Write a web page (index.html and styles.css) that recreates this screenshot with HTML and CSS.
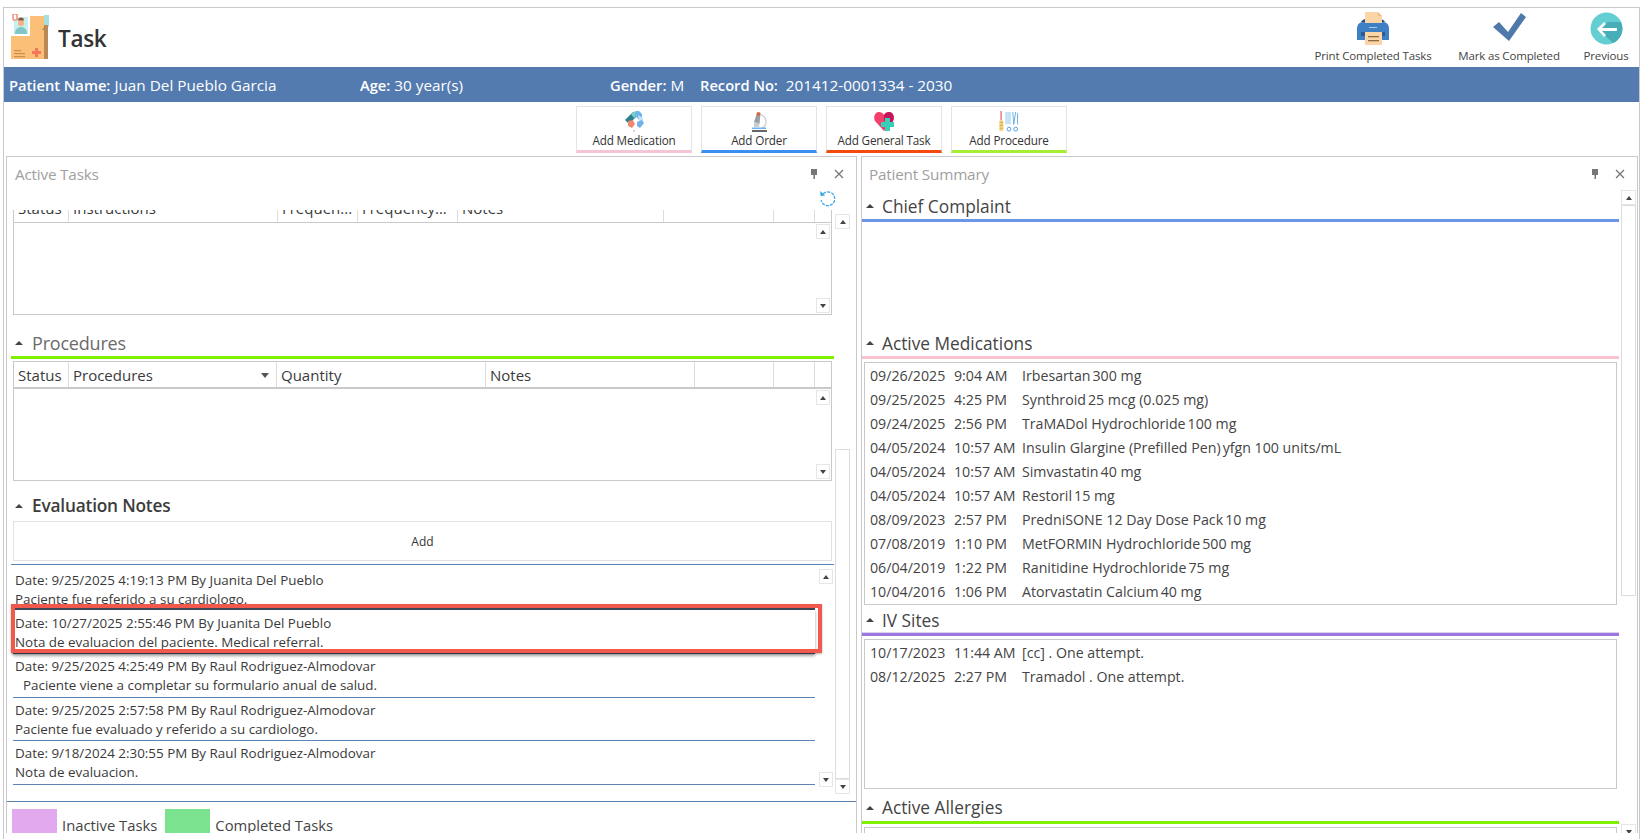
FILE: index.html
```html
<!DOCTYPE html>
<html lang="en">
<head>
<meta charset="utf-8">
<title>Task</title>
<link rel="stylesheet" href="styles.css">
</head>
<body>
<div class="frame">
  <header class="top">
    <div class="brand">
      <svg class="logo" width="38" height="46" viewBox="0 0 38 46">
        <rect x="33" y="1" width="5" height="12" fill="#a5dfe0"/>
        <path d="M3 2H33V45H0V22H3Z" fill="#fbbf77"/>
        <rect x="33" y="11" width="4" height="34" fill="#b98a55"/>
        <path d="M33 13l-2 3h2z" fill="#b98a55"/>
        <rect x="1" y="0" width="18" height="22" fill="#fff"/>
        <rect x="3" y="3" width="14" height="17" fill="#c6efed"/>
        <circle cx="10" cy="9" r="3" fill="#f3b184"/>
        <path d="M7 6.500a3 3 0 0 1 6 0z" fill="#8a5a3c"/>
        <path d="M4 20c0-5 3-7 6-7s6 2 6 7z" fill="#7fc6c4"/>
        <rect x="2" y="0" width="4" height="6" rx="1" fill="#fff" stroke="#f2725c" stroke-width="1.200"/>
        <rect x="3" y="36" width="7" height="1.200" fill="#c98f50"/>
        <rect x="3" y="39" width="11" height="1.200" fill="#c98f50"/>
        <rect x="3" y="42" width="11" height="1.200" fill="#c98f50"/>
        <path d="M24 34h3v3h3v3h-3v3h-3v-3h-3v-3h3z" fill="#f4775a"/>
      </svg>
      <h1 class="page-title">Task</h1>
    </div>
    <nav class="tools">
      <div class="tool tool-print">
        <svg width="34" height="33" viewBox="0 0 34 33">
          <path d="M1 17c0-4 2-7 6-7h20c4 0 6 3 6 7v11H1z" fill="#3f7fc4"/>
          <path d="M5 10c1-2 3-3 5-3h14c2 0 4 1 5 3z" fill="#25527f"/>
          <path d="M9 0h13l4 4v7H9z" fill="#fbd5a5"/>
          <path d="M22 0l4 4h-4z" fill="#e9c08c"/>
          <rect x="5" y="20" width="24" height="4" fill="#2c5c92"/>
          <rect x="13" y="15" width="8" height="1" fill="#a9cbee"/>
          <rect x="9" y="20" width="17" height="13" fill="#fbd5a5"/>
          <rect x="12" y="24" width="11" height="1.300" fill="#8c6b45"/>
          <rect x="12" y="28" width="11" height="1.300" fill="#8c6b45"/>
        </svg>
        <span class="tool-label">Print Completed Tasks</span>
      </div>
      <div class="tool tool-mark">
        <svg width="34" height="33" viewBox="0 0 34 33">
          <path d="M1 15l6-5 9 10L29 1l5 4-17 24z" fill="#4f79ab"/>
        </svg>
        <span class="tool-label">Mark as Completed</span>
      </div>
      <div class="tool tool-prev">
        <svg width="33" height="33" viewBox="0 0 33 33">
          <circle cx="16.500" cy="16.500" r="16" fill="#63cfd3"/>
          <path d="M8 17l10-7h13a16 16 0 0 1-8 21z" fill="#47adb7"/>
          <path d="M7 17l7-7 2 2-4 4h15v3H12l4 4-2 2z" fill="#fff"/>
        </svg>
        <span class="tool-label">Previous</span>
      </div>
    </nav>
  </header>

  <section class="patient-bar">
    <span class="pf pf-name"><b>Patient Name:</b> Juan Del Pueblo Garcia</span>
    <span class="pf pf-age"><b>Age:</b> 30 year(s)</span>
    <span class="pf pf-gender"><b>Gender:</b> M</span>
    <span class="pf pf-rec"><b>Record No:</b>&nbsp; 201412-0001334 - 2030</span>
  </section>

  <section class="actions">
    <div class="act act-pink">
      <svg width="22" height="21" viewBox="0 0 22 21">
        <path d="M2 9l8-8 4 4-8 8z" fill="#2f7f92"/>
        <path d="M8 3l4-3 3 3-4 4z" fill="#6fd4c4"/>
        <path d="M13 0h3l3 3v4l-3 2-4-5z" fill="#6fb2ee"/>
        <path d="M15 4l5 3v3l-4 1z" fill="#bfe6f4"/>
        <path d="M14 11l5-2 2 3-4 5-3-2z" fill="#6fb2ee"/>
        <path d="M5 10l5-1 2 4-3 4-4-2z" fill="#f08a6f"/>
        <circle cx="11" cy="20" r="1" fill="#f4b6a4"/>
      </svg>
      <span>Add Medication</span>
    </div>
    <div class="act act-blue">
      <svg width="20" height="21" viewBox="0 0 20 21">
        <path d="M12 4a7 7 0 0 1 1 13" fill="none" stroke="#d4d7da" stroke-width="1.500"/>
        <path d="M8 2h3.500l-1 11-5.500-2z" fill="#9aa0a6"/>
        <path d="M5 11l5.500 2-.5 3H5z" fill="#c9ccd0"/>
        <circle cx="9.500" cy="3" r="2" fill="#d5674c"/>
        <rect x="3" y="16.500" width="14" height="1.500" fill="#6fb2ee"/>
        <rect x="3" y="19" width="15" height="2" fill="#666"/>
      </svg>
      <span>Add Order</span>
    </div>
    <div class="act act-red">
      <svg width="21" height="21" viewBox="0 0 21 21">
        <path d="M10 20L1 10C-1 6 1 1 5 1c2 0 4 1 5 3 1-2 3-3 5-3 4 0 6 5 4 9z" fill="#f43f6b"/>
        <path d="M10 4c1-2 3-3 5-3 4 0 6 5 4 9l-4 5-5-6z" fill="#c2185b"/>
        <path d="M11 7h5v4h4v5h-4v4h-5v-4H7v-5h4z" fill="#35d0b8"/>
      </svg>
      <span>Add General Task</span>
    </div>
    <div class="act act-green">
      <svg width="22" height="22" viewBox="0 0 22 22">
        <rect x="2" y="0" width="1.400" height="10" fill="#e8736e"/>
        <path d="M1 10h4v11H1z" fill="#f5d57a"/>
        <path d="M1 12h4M1 15h4M1 18h4" stroke="#d9a94c" stroke-width="1"/>
        <path d="M8 1v13M10 1v13M12 1v13" stroke="#a8d4f2" stroke-width="1.300"/>
        <path d="M15 1l1 13M18 1l-2 13M20 2v12" stroke="#6aaee4" stroke-width="1"/>
        <circle cx="11" cy="19" r="2" fill="none" stroke="#4f9be0" stroke-width="1"/>
        <circle cx="18" cy="19" r="2" fill="none" stroke="#4f9be0" stroke-width="1"/>
      </svg>
      <span>Add Procedure</span>
    </div>
  </section>

  <div class="panels">
    <section class="panel panel-left">
      <div class="panel-head">
        <span class="panel-title">Active Tasks</span>
        <span class="panel-ctl">
          <svg class="ic-pin" width="8" height="10" viewBox="0 0 8 10"><path d="M1 0h6v6H5v4H3.500V6H1z" fill="#777"/></svg>
          <svg class="ic-x" width="10" height="10" viewBox="0 0 10 10"><path d="M1 1l8 8M9 1l-8 8" stroke="#777" stroke-width="1.300"/></svg>
        </span>
      </div>
      <div class="panel-body left-body">
        <div class="main-col">
          <div class="refresh-row">
            <svg width="18" height="18" viewBox="0 0 17 17"><path d="M4 3.500a6.500 6.500 0 1 1-2 6" fill="none" stroke="#3fa9e6" stroke-width="1.200" stroke-dasharray="3 1"/><path d="M1 1l.5 5 4.500-1z" fill="#3fa9e6"/></svg>
          </div>
          <div class="grid-clip">
            <div class="grid-head cols-a">
              <span>Status</span><span>Instructions</span><span>Frequen...</span><span>Frequency...</span><span>Notes</span><span></span><span></span><span></span>
            </div>
          </div>
          <div class="grid-body grid-body-a">
            <span class="sbtn sbtn-up"></span>
            <span class="sbtn sbtn-down"></span>
          </div>
          <h2 class="sect sect-light"><i class="tri"></i>Procedures</h2>
          <div class="rule rule-lime"></div>
          <div class="grid-head grid-full cols-b">
            <span>Status</span><span class="has-sort">Procedures<i class="sort"></i></span><span>Quantity</span><span>Notes</span><span></span><span></span><span></span>
          </div>
          <div class="grid-body grid-body-b">
            <span class="sbtn sbtn-up"></span>
            <span class="sbtn sbtn-down"></span>
          </div>
          <h2 class="sect sect-dark"><i class="tri"></i>Evaluation Notes</h2>
          <div class="add-btn">Add</div>
          <div class="notes">
            <div class="note-list">
              <article class="note note-first"><p>Date: 9/25/2025 4:19:13 PM By Juanita Del Pueblo</p><p>Paciente fue referido a su cardiologo.</p></article>
              <article class="note note-hl"><p>Date: 10/27/2025 2:55:46 PM By Juanita Del Pueblo</p><p>Nota de evaluacion del paciente. Medical referral.</p></article>
              <article class="note"><p>Date: 9/25/2025 4:25:49 PM By Raul Rodriguez-Almodovar</p><p class="indent">Paciente viene a completar su formulario anual de salud.</p></article>
              <article class="note"><p>Date: 9/25/2025 2:57:58 PM By Raul Rodriguez-Almodovar</p><p>Paciente fue evaluado y referido a su cardiologo.</p></article>
              <article class="note"><p>Date: 9/18/2024 2:30:55 PM By Raul Rodriguez-Almodovar</p><p>Nota de evaluacion.</p></article>
            </div>
            <div class="note-scroll">
              <span class="sbtn sbtn-up"></span>
              <span class="sbtn sbtn-down"></span>
            </div>
          </div>
        </div>
        <div class="scroll scroll-left">
          <span class="sbtn sbtn-up"></span>
          <span class="track"></span>
          <span class="thumb"></span>
          <span class="sbtn sbtn-down"></span>
        </div>
      </div>
      <footer class="legend">
        <span class="swatch swatch-purple"></span><span class="legend-label">Inactive Tasks</span>
        <span class="swatch swatch-green"></span><span class="legend-label">Completed Tasks</span>
      </footer>
    </section>

    <section class="panel panel-right">
      <div class="panel-head">
        <span class="panel-title">Patient Summary</span>
        <span class="panel-ctl">
          <svg class="ic-pin" width="8" height="10" viewBox="0 0 8 10"><path d="M1 0h6v6H5v4H3.500V6H1z" fill="#777"/></svg>
          <svg class="ic-x" width="10" height="10" viewBox="0 0 10 10"><path d="M1 1l8 8M9 1l-8 8" stroke="#777" stroke-width="1.300"/></svg>
        </span>
      </div>
      <div class="panel-body right-body">
        <div class="summary">
          <h2 class="sum-head sum-chief"><i class="tri"></i>Chief Complaint</h2>
          <div class="rule rule-blue"></div>
          <div class="chief-space"></div>
          <h2 class="sum-head"><i class="tri"></i>Active Medications</h2>
          <div class="rule rule-pink"></div>
          <div class="box box-meds">
            <div class="row"><span>09/26/2025</span><span>9:04 AM</span><span>Irbesartan<span class="dose">300 mg</span></span></div>
            <div class="row"><span>09/25/2025</span><span>4:25 PM</span><span>Synthroid<span class="dose">25 mcg (0.025 mg)</span></span></div>
            <div class="row"><span>09/24/2025</span><span>2:56 PM</span><span>TraMADol Hydrochloride<span class="dose">100 mg</span></span></div>
            <div class="row"><span>04/05/2024</span><span>10:57 AM</span><span>Insulin Glargine (Prefilled Pen)<span class="dose">yfgn 100 units/mL</span></span></div>
            <div class="row"><span>04/05/2024</span><span>10:57 AM</span><span>Simvastatin<span class="dose">40 mg</span></span></div>
            <div class="row"><span>04/05/2024</span><span>10:57 AM</span><span>Restoril<span class="dose">15 mg</span></span></div>
            <div class="row"><span>08/09/2023</span><span>2:57 PM</span><span>PredniSONE 12 Day Dose Pack<span class="dose">10 mg</span></span></div>
            <div class="row"><span>07/08/2019</span><span>1:10 PM</span><span>MetFORMIN Hydrochloride<span class="dose">500 mg</span></span></div>
            <div class="row"><span>06/04/2019</span><span>1:22 PM</span><span>Ranitidine Hydrochloride<span class="dose">75 mg</span></span></div>
            <div class="row"><span>10/04/2016</span><span>1:06 PM</span><span>Atorvastatin Calcium<span class="dose">40 mg</span></span></div>
          </div>
          <h2 class="sum-head sum-iv"><i class="tri"></i>IV Sites</h2>
          <div class="rule rule-purple"></div>
          <div class="box box-iv">
            <div class="row"><span>10/17/2023</span><span>11:44 AM</span><span>[cc] . One attempt.</span></div>
            <div class="row"><span>08/12/2025</span><span>2:27 PM</span><span>Tramadol . One attempt.</span></div>
          </div>
          <h2 class="sum-head sum-allergy"><i class="tri"></i>Active Allergies</h2>
          <div class="rule rule-lime"></div>
          <div class="box box-allergy">
            <div class="row"><span>09/17/2024</span><span>10:55 AM</span><span>Crustacean</span></div>
          </div>
        </div>
        <div class="scroll scroll-right">
          <span class="sbtn sbtn-up"></span>
          <span class="thumb"></span>
          <span class="track"></span>
          <span class="sbtn sbtn-down"></span>
        </div>
      </div>
    </section>
  </div>
</div>
</body>
</html>
```
FILE: styles.css
```css
* { box-sizing: border-box; }
html, body { margin: 0; height: 100%; overflow: hidden; background: #fff; }
body { font-family: "Open Sans", "Noto Sans", sans-serif; color: #3a3a3a; font-size: 14px; }
h1, h2, p { margin: 0; font-weight: 400; }

.frame {
  margin: 7px 0 0 3px;
  width: 1637px;
  height: 832px;
  border: 1px solid #c9c9c9;
  border-bottom: 0;
  overflow: hidden;
}

/* header */
.top { height: 59px; display: flex; justify-content: space-between; }
.brand { display: flex; align-items: flex-start; padding: 6px 0 0 7px; }
.logo { display: block; }
.page-title { font-size: 22.500px; line-height: 32px; font-weight: 600; color: #333; margin: 9px 0 0 9px; letter-spacing: -0.3px; }
.tools { display: flex; }
.tool { display: flex; flex-direction: column; align-items: center; padding-top: 4px; }
.tool svg { display: block; height: 33px; }
.tool-label { font-size: 11.500px; line-height: 16px; margin-top: 3px; color: #444; letter-spacing: -0.15px; white-space: nowrap; }
.tool-print { width: 118px; }
.tool-mark { width: 112px; margin-left: 21px; }
.tool-prev { width: 54px; margin-left: 14px; margin-right: 6px; }

/* patient bar */
.patient-bar {
  height: 35px;
  background: #537bb0;
  color: #fff;
  display: flex;
  align-items: center;
  padding: 1px 0 0 5px;
  font-size: 15.300px;
  white-space: nowrap;
}
.pf b { font-weight: 600; font-size: 14.700px; }
.pf-name { width: 351px; }
.pf-age { width: 250px; }
.pf-gender { width: 90px; }

/* action buttons */
.actions { height: 54px; display: flex; justify-content: center; gap: 9px; padding-top: 4px; }
.act {
  width: 116px;
  height: 47px;
  border: 1px solid #e4e4e4;
  border-bottom-width: 3px;
  display: flex;
  flex-direction: column;
  align-items: center;
  padding-top: 4px;
  font-size: 11.700px;
  line-height: 16px;
  color: #333;
  letter-spacing: -0.15px;
}
.act svg { display: block; height: 21px; }
.act-pink { border-bottom-color: #f7c4d4; }
.act-blue { border-bottom-color: #3b8fee; }
.act-red { border-bottom-color: #f4490f; }
.act-green { border-bottom-color: #a5ee33; }

/* panels */
.panels { display: flex; gap: 4px; padding-left: 2px; height: 677px; }
.panel { border: 1px solid #c9c9c9; border-bottom: 0; display: flex; flex-direction: column; overflow: hidden; }
.panel-left { width: 851px; }
.panel-right { width: 777px; }
.panel-head { height: 33px; display: flex; justify-content: space-between; align-items: center; flex: none; }
.panel-title { font-size: 15.300px; color: #a0a0a0; padding-left: 8px; letter-spacing: -0.2px; }
.panel-right .panel-title { padding-left: 7px; }
.panel-ctl { display: flex; align-items: center; gap: 16px; padding-right: 12px; }
.panel-ctl svg { display: block; }
.panel-body { display: flex; flex: none; }

.left-body { height: 612px; border-bottom: 1px solid #5d84b4; padding-left: 4px; }
.main-col { width: 823px; margin-right: 1px; display: flex; flex-direction: column; flex: none; }
.refresh-row { height: 20px; display: flex; justify-content: flex-end; }
.refresh-row svg { display: block; margin-right: -3px; }

/* grids */
.grid-clip { height: 12px; margin: 0 2px; overflow: hidden; border: 1px solid #c9c9c9; border-width: 0 1px; flex: none; }
.grid-head { display: grid; height: 28px; line-height: 27px; font-size: 15px; color: #3a3a3a; }
.grid-clip .grid-head { margin-top: -15px; }
.grid-head > span { border-left: 1px solid #dcdcdc; padding-left: 4px; white-space: nowrap; overflow: hidden; }
.grid-head > span:first-child { border-left: 0; }
.cols-a { grid-template-columns: 54px 209px 80px 100px 206px 110px 41px 1fr; }
.cols-b { grid-template-columns: 54px 208px 209px 209px 79px 41px 1fr; }
.grid-full { margin: 2px 2px 0; border: 1px solid #c9c9c9; border-width: 1px 1px 2px; flex: none; }
.has-sort { position: relative; }
.sort {
  position: absolute; right: 7px; top: 11px;
  border: 4px solid transparent; border-top: 5px solid #555; border-bottom: 0;
}
.grid-body {
  margin: 0 2px;
  border: 1px solid #c9c9c9;
  display: flex;
  flex-direction: column;
  justify-content: space-between;
  align-items: flex-end;
  flex: none;
  padding: 1px 1px 1px 0;
}
.grid-body-a { height: 93px; }
.grid-body-b { height: 92px; border-top: 0; }

.sbtn { width: 14px; height: 15px; border: 1px solid #e6e6e6; display: flex; align-items: center; justify-content: center; flex: none; }
.sbtn::after { content: ""; border: 3px solid transparent; }
.sbtn-up::after { border-bottom: 4px solid #444; border-top: 0; }
.sbtn-down::after { border-top: 4px solid #444; border-bottom: 0; }

/* section headings */
.sect { font-size: 18px; line-height: 24px; display: flex; align-items: center; padding-left: 4px; flex: none; }
.tri { border: 4px solid transparent; border-bottom: 4px solid #444; border-top: 0; width: 0; height: 0; margin-right: 8px; flex: none; }
.sect .tri { margin-right: 9px; }
.sect-light { height: 41px; padding-top: 15px; color: #6b6b6b; letter-spacing: -0.2px; }
.sect-dark { height: 40px; padding-top: 10px; font-size: 17.300px; font-weight: 600; color: #3c3c3c; letter-spacing: -0.2px; }

.rule { height: 3px; flex: none; }
.rule-lime { background: #7ff000; }
.rule-blue { background: #6d96e6; }
.rule-pink { background: #f9c2cf; }
.rule-purple { background: #9a78de; box-shadow: 0 -1px 0 #ddd0f4; }

.add-btn {
  height: 40px; margin: 0 2px; border: 1px solid #e2e2e2; display: flex; align-items: center; justify-content: center;
  font-size: 12px; color: #333; flex: none;
}

/* evaluation notes */
.notes { margin-top: 3px; border-top: 1px solid #5d84b4; display: flex; height: 223px; flex: none; }
.note-list { width: 802px; margin-left: 2px; flex: none; }
.note { height: 43.700px; padding: 3px 0 0 2px; border-bottom: 1px solid #5d84b4; font-size: 13.400px; line-height: 19px; color: #3a3a3a; white-space: nowrap; }
.note-first { height: 44px; border-bottom: 0; padding-top: 5.500px; overflow: hidden; }
.note-hl { position: relative; height: 45px; border-bottom: 2px solid #3d4656; box-shadow: 0 2px 3px rgba(0,0,0,.35); padding-top: 4.500px; }
.note-hl::before { content: ""; position: absolute; left: 0; right: 0; top: -1px; height: 2px; background: #3d4656; }
.note-hl::after {
  content: ""; position: absolute; left: -2px; right: -7px; top: -5px; bottom: -1px;
  border: 4px solid #f0594c; box-shadow: 0 1px 2px rgba(0,0,0,.3);
}
.note .indent { padding-left: 8px; }
.note-scroll { display: flex; flex-direction: column; justify-content: space-between; margin-left: 4px; padding-top: 4px; height: 222px; }

/* outer scroll */
.scroll { display: flex; flex-direction: column; width: 15px; flex: none; }
.scroll .sbtn { width: 15px; }
.scroll-left { margin-top: 24px; height: 580px; }
.track { flex: 1; }
.thumb { display: block; width: 15px; border: 1px solid #dcdcdc; }
.scroll-left .thumb { height: 330px; flex: none; }
.scroll-right { height: 649px; margin-left: 2px; }
.scroll-right .thumb { height: 391px; flex: none; }

/* legend */
.legend { display: flex; align-items: center; padding: 7px 0 0 5px; font-size: 14.800px; color: #444; }
.swatch { width: 45px; height: 31px; flex: none; }
.swatch-purple { background: #e3a9ee; }
.swatch-green { background: #7be28f; margin-left: 8px; }
.legend-label { padding-left: 5px; white-space: nowrap; }

/* summary */
.right-body { height: 650px; }
.summary { width: 757px; display: flex; flex-direction: column; flex: none; }
.sum-head { height: 29px; display: flex; align-items: center; padding: 3px 0 0 4px; font-size: 17.300px; color: #444; flex: none; }
.sum-iv { height: 28px; padding-top: 2px; }
.sum-allergy { height: 32px; padding-top: 5px; }
.chief-space { height: 105px; flex: none; }
.box { margin: 3px 2px 0; border: 1px solid #c9c9c9; flex: none; }
.box-meds { height: 243px; }
.box-iv { height: 150px; }
.box-allergy { height: 60px; }
.row { height: 24px; display: grid; grid-template-columns: 84px 68px 1fr; align-items: center; padding-left: 5px; font-size: 14.200px; color: #444; white-space: nowrap; }
.dose { margin-left: 2px; }
```
